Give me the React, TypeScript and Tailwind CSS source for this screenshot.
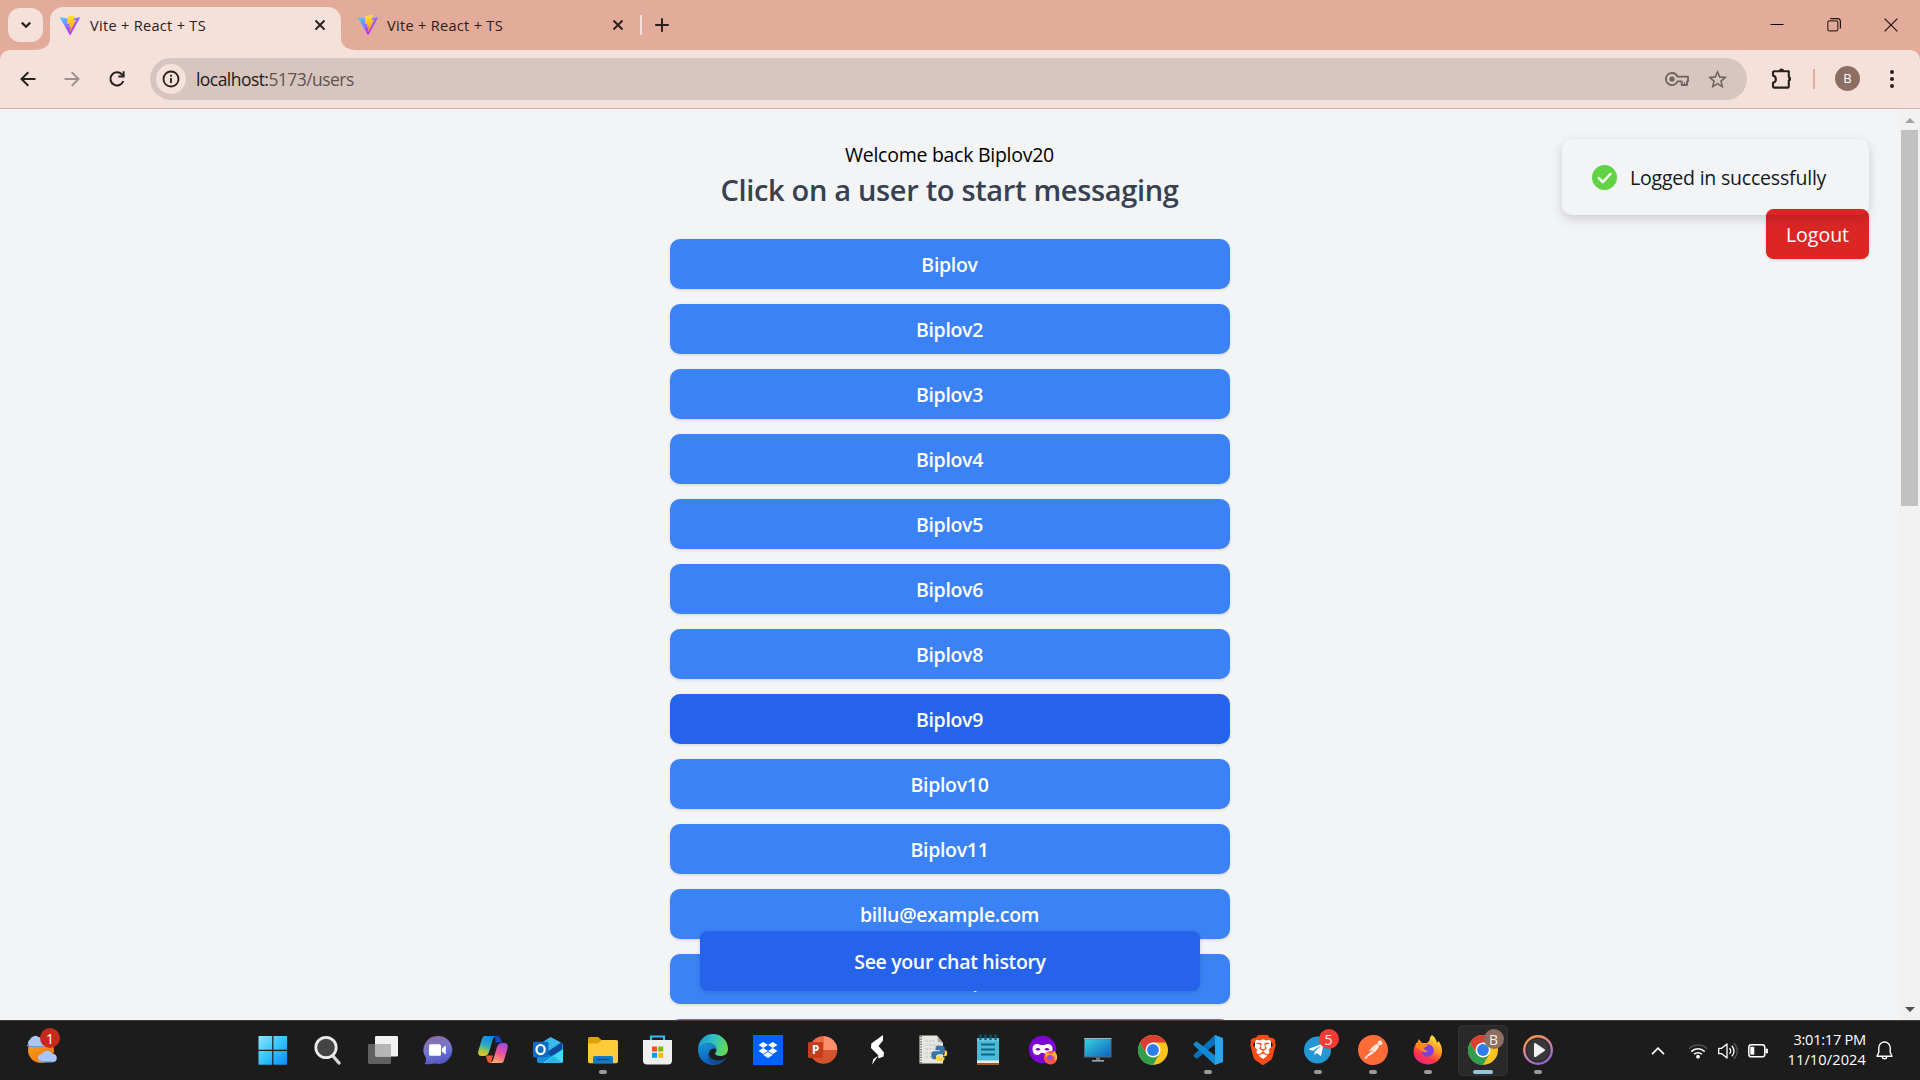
import React from "react";
import { SiDropbox, SiPostman, SiBrave } from "react-icons/si";
import { FaTelegramPlane } from "react-icons/fa";
import { MdStarOutline } from "react-icons/md";

const users = [
  "Biplov",
  "Biplov2",
  "Biplov3",
  "Biplov4",
  "Biplov5",
  "Biplov6",
  "Biplov8",
  "Biplov9",
  "Biplov10",
  "Biplov11",
  "billu@example.com",
  "billu2@example.com",
  "",
];

function ViteLogo({ id }: { id: string }) {
  return (
    <svg width="20" height="20" viewBox="0 0 256 257" className="shrink-0">
      <defs>
        <linearGradient id={id + "a"} x1="-.8%" x2="57.6%" y1="7.7%" y2="78.4%">
          <stop offset="0%" stopColor="#41D1FF" />
          <stop offset="100%" stopColor="#BD34FE" />
        </linearGradient>
        <linearGradient id={id + "b"} x1="43.4%" x2="50.3%" y1="2.2%" y2="89%">
          <stop offset="0%" stopColor="#FFEA83" />
          <stop offset="8.3%" stopColor="#FFDD35" />
          <stop offset="100%" stopColor="#FFA800" />
        </linearGradient>
      </defs>
      <path
        fill={`url(#${id}a)`}
        d="M255.153 37.938L134.897 252.976c-2.483 4.44-8.862 4.466-11.382.048L.875 37.958c-2.746-4.814 1.371-10.646 6.827-9.67l120.385 21.517a6.537 6.537 0 0 0 2.322-.004l117.867-21.483c5.438-.991 9.574 4.796 6.877 9.62Z"
      />
      <path
        fill={`url(#${id}b)`}
        d="M185.432.063L96.44 17.501a3.268 3.268 0 0 0-2.634 3.014l-5.474 92.456a3.268 3.268 0 0 0 3.997 3.378l24.777-5.718c2.318-.535 4.413 1.507 3.936 3.838l-7.361 36.047c-.495 2.426 1.782 4.5 4.151 3.78l15.304-4.649c2.372-.72 4.652 1.36 4.15 3.788l-11.698 56.621c-.732 3.542 3.979 5.473 5.943 2.437l1.313-2.028l72.516-144.72c1.215-2.423-.88-5.186-3.54-4.672l-25.505 4.922c-2.396.462-4.435-1.77-3.759-4.114l16.646-57.705c.677-2.35-1.37-4.583-3.769-4.113Z"
      />
    </svg>
  );
}

function TabClose() {
  return (
    <svg width="12" height="12" viewBox="0 0 12 12" className="shrink-0">
      <path d="M1.5 1.5 10.5 10.5M10.5 1.5 1.5 10.5" stroke="#27201e" strokeWidth="1.9" />
    </svg>
  );
}

function TabStrip() {
  return (
    <div className="flex h-[50px] items-start bg-[#e3ab99]">
      <div className="ml-2 mt-2 flex h-[34px] w-[35px] items-center justify-center rounded-[12px] bg-[#f5e0da]">
        <svg width="12" height="8" viewBox="0 0 12 8">
          <path d="M1.8 1.6 6 5.8l4.2-4.2" fill="none" stroke="#27201e" strokeWidth="2.2" />
        </svg>
      </div>
      <div className="mt-[38px] flex h-3 w-[7px] justify-end">
        <svg width="16" height="12" viewBox="0 0 16 12" className="shrink-0">
          <path d="M16 0v12H0c10 0 16-4 16-12Z" fill="#f5e0da" />
        </svg>
      </div>
      <div className="mt-[7px] flex h-[43px] w-[291px] items-center rounded-t-[13px] bg-[#f5e0da] pb-[7px] pl-[10px] pr-[15px]">
        <ViteLogo id="t1" />
        <span className="ml-[10px] grow whitespace-nowrap pt-0.5 text-[14.6px] tracking-[0.28px] text-[#27201e]">Vite + React + TS</span>
        <TabClose />
      </div>
      <div className="mt-[38px] h-3 w-[16px]">
        <svg width="16" height="12" viewBox="0 0 16 12">
          <path d="M0 0v12h16C6 12 0 8 0 0Z" fill="#f5e0da" />
        </svg>
      </div>
      <div className="mt-[7px] flex h-[36px] w-[267px] items-center">
        <span className="ml-px flex">
          <ViteLogo id="t2" />
        </span>
        <span className="ml-[9px] grow whitespace-nowrap pt-0.5 text-[14.6px] tracking-[0.28px] text-[#27201e]">Vite + React + TS</span>
        <TabClose />
      </div>
      <div className="ml-[16px] mt-[15px] h-5 w-[2px] bg-[#f5e0da]" />
      <svg width="16" height="16" viewBox="0 0 16 16" className="ml-[12px] mt-[17px]">
        <path d="M8 1.2v13.6M1.2 8h13.6" stroke="#27201e" strokeWidth="2" />
      </svg>
      <div className="mr-[22px] mt-[18px] flex grow justify-end gap-[43px]">
        <svg width="14" height="14" viewBox="0 0 14 14">
          <path d="M.5 6.5h13" stroke="#000" />
        </svg>
        <svg width="14" height="14" viewBox="0 0 14 14">
          <rect x=".8" y="2.8" width="10" height="10" rx="1.6" fill="none" stroke="#3a2a26" strokeWidth="1.2" />
          <path d="M3.3.6h7.2A2.9 2.9 0 0 1 13.4 3.500v7" fill="none" stroke="#1c1412" strokeWidth="1.2" />
        </svg>
        <svg width="14" height="14" viewBox="0 0 14 14">
          <path d="m.6.6 12.800 12.800M13.400.6.6 13.400" stroke="#1c1412" strokeWidth="1.2" />
        </svg>
      </div>
    </div>
  );
}

function Toolbar() {
  return (
    <div className="bg-[#e3ab99]">
      <div className="flex h-[59px] items-center rounded-t-[10px] border-b border-[#cdb4ad] bg-[#f5e0da] text-[#27201e]">
        <svg width="16" height="16" viewBox="0 0 16 16" className="ml-5">
          <path d="M15.500 8H1.800M8.300 1.200 1.500 8l6.800 6.800" fill="none" stroke="#27201e" strokeWidth="2" />
        </svg>
        <svg width="16" height="16" viewBox="0 0 16 16" className="ml-[28px]">
          <path d="M.5 8h13.700M7.700 1.200 14.500 8l-6.800 6.800" fill="none" stroke="#9d908c" strokeWidth="1.900" />
        </svg>
        <svg width="18" height="18" viewBox="0 0 18 18" className="ml-[28px]">
          <path d="M15.300 11A6.600 6.600 0 1 1 13.900 4.400L15.500 6" fill="none" stroke="#27201e" strokeWidth="2" />
          <path d="M16.600 1.300v6.200h-6.200V5.500h4.200V1.300Z" fill="#27201e" />
        </svg>
        <div className="ml-6 flex h-[42px] w-[1597px] items-center rounded-full bg-[#d7c6bf] pl-[6px]">
          <div className="flex size-[30px] items-center justify-center rounded-full bg-[#f5e0da]">
            <svg width="18" height="18" viewBox="0 0 18 18">
              <circle cx="9" cy="9" r="7.500" fill="none" stroke="#27201e" strokeWidth="1.800" />
              <path d="M9 8v5M9 4.800v1.900" stroke="#27201e" strokeWidth="1.800" />
            </svg>
          </div>
          <span className="ml-[10px] whitespace-nowrap pt-px text-[17.5px] tracking-[-0.55px] text-[#5f5450]">
            <span className="text-[#1f1a18]">localhost:</span>5173/users
          </span>
          <div className="mr-[18px] flex grow items-center justify-end gap-[17px] text-[#6b6360]">
            <svg width="24" height="14" viewBox="0 0 24 14">
              <path
                d="M7 1a6 6 0 1 0 5.400 8.400h4.300V13h5.300V9.400h1V4.600H12.400A6 6 0 0 0 7 1Z"
                fill="none"
                stroke="#6b6360"
                strokeWidth="1.800"
                strokeLinejoin="round"
              />
              <circle cx="7" cy="7" r="2.600" fill="#6b6360" />
              <path d="M19.300 10v3" stroke="#6b6360" />
            </svg>
            <MdStarOutline size={23} />
          </div>
        </div>
        <svg width="24" height="24" viewBox="0 0 24 24" className="ml-[22px] -mt-[2px]">
          <path
            d="M5.200 5.200h14.600v5.600a2.200 2.200 0 0 1 0 3.800v5.800a1.200 1.200 0 0 1-1.200 1.200H5.200a1.200 1.200 0 0 1-1.200-1.200v-3.600a3.700 3.700 0 0 0 0-7.200V6.400a1.200 1.200 0 0 1 1.200-1.200Z"
            fill="none"
            stroke="#27201e"
            strokeWidth="2.100"
            strokeLinejoin="round"
          />
          <path d="M10 5a2.500 2.500 0 0 1 5 0ZM19.500 10.200a2.500 2.500 0 0 1 0 5Z" fill="#27201e" />
        </svg>
        <div className="ml-[20px] h-5 w-[2px] bg-[#e3ab99]" />
        <div className="ml-5 -mt-px flex size-[25px] items-center justify-center rounded-full bg-[#8d6e63] text-[13px] text-white">B</div>
        <svg width="4" height="18" viewBox="0 0 4 18" className="ml-[30px]">
          <circle cx="2" cy="2" r="2" fill="#27201e" />
          <circle cx="2" cy="9" r="2" fill="#27201e" />
          <circle cx="2" cy="16" r="2" fill="#27201e" />
        </svg>
      </div>
    </div>
  );
}

function Toast() {
  return (
    <div className="absolute right-[51px] top-[30px] z-20 flex h-[76px] w-[307px] items-center rounded-[10px] pl-[30px] shadow-[0_4px_12px_rgba(0,0,0,0.16)]">
      <svg width="25" height="25" viewBox="0 0 25 25">
        <circle cx="12.500" cy="12.500" r="12.500" fill="#61d345" />
        <path d="m6.800 13.200 4 4L18.400 9" fill="none" stroke="#fff" strokeWidth="2.500" strokeLinecap="round" strokeLinejoin="round" />
      </svg>
      <span className="ml-[13px] whitespace-nowrap pt-0.5 text-[19.5px] tracking-[-0.2px] text-[#16181c]">Logged in successfully</span>
    </div>
  );
}

function Page() {
  return (
    <main className="relative flex h-[911px] overflow-hidden bg-[#f3f4f6]">
      <div className="flex grow flex-col items-center pt-[31px] text-[19.5px] leading-[30px]">
        <p className="shrink-0 tracking-[-0.27px] text-black">Welcome back Biplov20</p>
        <h1 className="mb-[29px] shrink-0 text-[29px] font-semibold leading-[40px] tracking-[-0.32px] text-[#374151]">
          Click on a user to start messaging
        </h1>
        <ul className="flex w-[560px] flex-col gap-[15px]">
          {users.map((name, i) => (
            <li
              key={i}
              className={
                "flex h-[50px] shrink-0 items-center justify-center rounded-[10px] pt-0.5 font-semibold tracking-[-0.32px] text-white shadow-[0_1px_3px_rgba(0,0,0,0.14)] " +
                (name === "Biplov9" ? "bg-[#2563eb]" : "bg-[#3b82f6]")
              }
            >
              {name}
            </li>
          ))}
        </ul>
      </div>
      <div className="flex w-[21px] flex-col items-center bg-[#f1f1f1]">
        <svg width="10" height="5" viewBox="0 0 10 5" className="mt-[9px]">
          <path d="M5 0l5 5H0Z" fill="#a3a3a3" />
        </svg>
        <div className="mt-[7px] h-[376px] w-[17px] bg-[#c1c1c1]" />
        <svg width="10" height="5" viewBox="0 0 10 5" className="mb-[8px] mt-auto">
          <path d="M0 0h10L5 5Z" fill="#505050" />
        </svg>
      </div>
      <button className="absolute bottom-[29px] left-[700px] h-[60px] w-[500px] rounded-[7.5px] bg-[#2563eb] pt-0.5 text-[19.5px] font-semibold tracking-[-0.33px] text-white shadow-[0_1px_4px_rgba(0,0,0,0.15)]">
        See your chat history
      </button>
      <button className="absolute right-[51px] top-[100px] z-10 h-[50px] w-[103px] rounded-[7.5px] bg-[#dc2626] pt-0.5 text-[19.5px] text-white shadow-[0_1px_3px_rgba(0,0,0,0.15)]">
        Logout
      </button>
      <Toast />
    </main>
  );
}

function Chrome() {
  return (
    <>
      <circle cx="15" cy="15" r="15" fill="#fcc31e" />
      <path d="M2 7.500A15 15 0 0 0 15 30l6.500-11.200L15 15 8.500 18.700Z" fill="#2f9e4f" />
      <path d="M2 7.500A15 15 0 0 1 28 7.500H15L8.500 18.700Z" fill="#d93f33" />
      <circle cx="15" cy="15" r="7.500" fill="#fff" />
      <circle cx="15" cy="15" r="5.900" fill="#2f7de9" />
    </>
  );
}

const icons: { art: React.ReactNode; badge?: string; badgeColor?: string; mark?: "run" | "active" }[] = [
  {
    art: (
      <>
        <defs>
          <linearGradient id="win" x1="0" y1="0" x2="1" y2="1">
            <stop offset="0" stopColor="#8ce6ff" />
            <stop offset=".5" stopColor="#35c3fc" />
            <stop offset="1" stopColor="#0a8dfa" />
          </linearGradient>
        </defs>
        <path d="M.5 1h13.700v13.700H.5ZM15.400 1H29.100v13.700H15.400ZM.5 16h13.700v13.700H.5ZM15.400 16H29.100v13.700H15.400Z" fill="url(#win)" />
      </>
    ),
  },
  {
    art: (
      <>
        <path d="m19.500 20.500 6.500 7.500" stroke="#d5d9dd" strokeWidth="3.400" strokeLinecap="round" />
        <circle cx="13" cy="12.500" r="10.200" fill="#444" stroke="#e9ebed" strokeWidth="2.800" />
      </>
    ),
  },
  {
    art: (
      <>
        <rect x="0" y="9" width="23" height="20" rx="1.200" fill="#616161" />
        <rect x="7" y="1" width="23" height="20.500" rx="1.200" fill="#f1f1f1" />
        <path d="M7 9h16v12.500H8.200A1.200 1.200 0 0 1 7 20.300Z" fill="#b5b5b5" />
      </>
    ),
  },
  {
    art: (
      <>
        <defs>
          <linearGradient id="chat" x1=".2" y1="0" x2=".5" y2="1">
            <stop offset="0" stopColor="#91699f" />
            <stop offset=".5" stopColor="#7379cf" />
            <stop offset="1" stopColor="#5254c3" />
          </linearGradient>
        </defs>
        <path d="M15 1a14 14 0 1 1-3 27.600c-3 .6-7 .8-10.700.4C3 27.500 3 25.500 3 23A14 14 0 0 1 15 1Z" fill="url(#chat)" />
        <rect x="6" y="9.300" width="12" height="11.500" rx="1.600" fill="#fff" />
        <path d="m19 13.400 3.800-2.800v9L19 16.800Z" fill="#fff" />
      </>
    ),
  },
  {
    art: (
      <>
        <defs>
          <linearGradient id="cpa" x1=".6" y1="0" x2=".3" y2="1">
            <stop offset="0" stopColor="#1687e0" />
            <stop offset=".45" stopColor="#27a9cb" />
            <stop offset=".8" stopColor="#a6c83e" />
            <stop offset="1" stopColor="#f0c328" />
          </linearGradient>
          <linearGradient id="cpb" x1=".7" y1="0" x2=".3" y2="1">
            <stop offset="0" stopColor="#a14ce0" />
            <stop offset=".5" stopColor="#ee5595" />
            <stop offset="1" stopColor="#ffb25a" />
          </linearGradient>
        </defs>
        <path d="M17 1h2.500c2.500 0 3.500 4.500 5 6.500h-7Z" fill="#1647bd" />
        <path d="M7 1h12c-3 0-4 2-5 6l-3 10c-1 3-3 4-5 4H3.500C0 21-.2 18 .6 15l3-10C4.500 2 5 1 7 1Z" fill="url(#cpa)" />
        <path d="M8 20.500h7l-2 7.500c-3 0-4-1-5-7.500Z" fill="#ed5a34" />
        <path d="M23 28H11c3 0 4-2 5-6l3-10c1-3 3-4 5-4h2.500c3.500 0 3.700 3 2.900 6l-3 10c-.9 3-1.400 4-3.400 4Z" fill="url(#cpb)" />
      </>
    ),
  },
  {
    art: (
      <>
        <path d="M4 12 17.500 2.500 30 9v17a2 2 0 0 1-2 2H6a2 2 0 0 1-2-2Z" fill="#1593d9" />
        <path d="M6 9.500 17.500 2 28 7.500 15 16H6Z" fill="#38b9ef" />
        <path d="m13 18 16-11v8L18 21Z" fill="#0b4a9b" />
        <path d="M10 28 30 14v12a2 2 0 0 1-2 2Z" fill="#42d6f7" />
        <path d="m12 28 9-7 8 7Z" fill="#29b4eb" />
        <rect x="0" y="6.700" width="15.500" height="15.800" rx="1.500" fill="#0d6cc6" />
        <ellipse cx="7.600" cy="14.600" rx="4.100" ry="4.600" fill="none" stroke="#fff" strokeWidth="2.200" />
      </>
    ),
  },
  {
    mark: "run",
    art: (
      <>
        <path d="M0 3.500A1.500 1.500 0 0 1 1.500 2H10l3.500 3H20v8H0Z" fill="#dfa00b" />
        <path d="M0 8.500h10l4-3.500h14.500A1.500 1.500 0 0 1 30 6.500v20a1.700 1.700 0 0 1-1.700 1.700H1.700A1.700 1.700 0 0 1 0 26.500Z" fill="#fdca3c" />
        <path d="M5 28.200V23a2 2 0 0 1 2-2h16a2 2 0 0 1 2 2v5.200Z" fill="#117ac9" />
        <path d="M8.500 24.500h13" stroke="#0a4b8a" strokeWidth="1.300" />
      </>
    ),
  },
  {
    art: (
      <>
        <path d="M8 6V1.500h13V6" fill="none" stroke="#35bdf3" strokeWidth="2.200" />
        <path d="M0 5h29v20.500a4 4 0 0 1-4 4H4a4 4 0 0 1-4-4Z" fill="#efefef" />
        <path d="M9 11.500h5v5H9Z" fill="#f04f22" />
        <path d="M15.200 11.500h5v5h-5Z" fill="#7fb900" />
        <path d="M9 17.800h5v5H9Z" fill="#00a2ed" />
        <path d="M15.200 17.800h5v5h-5Z" fill="#feb800" />
      </>
    ),
  },
  {
    art: (
      <>
        <defs>
          <linearGradient id="edgeTop" x1="0" y1=".3" x2="1" y2=".5">
            <stop offset="0" stopColor="#1d95d8" />
            <stop offset=".5" stopColor="#31c1c4" />
            <stop offset="1" stopColor="#65dc4b" />
          </linearGradient>
          <linearGradient id="edgeLow" x1="0" y1="0" x2=".3" y2="1">
            <stop offset="0" stopColor="#1799dc" />
            <stop offset="1" stopColor="#0c5cb8" />
          </linearGradient>
        </defs>
        <path d="M0 14A15 15 0 0 1 30 14c0 4.500-3.500 7-7.500 7-3.500 0-5.500-1.200-5.500-2.200 0-.8 1.500-1.600 1.500-4C18.500 11 15 8.500 11 8.500 5 8.500 1 11 0 14Z" fill="url(#edgeTop)" />
        <path d="M0 15C.5 10 5 8.500 10 8.500c5.500 0 8.500 3 8.500 6-2-2-6.500-1.500-7.500 3-1 5 3 10 8 12A15 15 0 0 1 0 15Z" fill="url(#edgeLow)" />
        <path d="M11 17.500c0 5 4.500 8 9 8 3 0 5.500-1 7-2 .7-.4 1 0 .6.600A15 15 0 0 1 17 29.900C11 28.500 8.500 21 11 17.500Z" fill="#104d91" />
      </>
    ),
  },
  {
    art: (
      <>
        <path d="M0 0h30v30H0Z" fill="#0061fe" />
        <SiDropbox x={5.5} y={5.5} size={19} color="#fff" />
      </>
    ),
  },
  {
    art: (
      <>
        <circle cx="15.500" cy="15" r="13.800" fill="#d35230" />
        <path d="M15.500 1.200A13.800 13.800 0 0 1 29.300 15H15.500Z" fill="#ff8f6b" />
        <path d="M15.500 1.200A13.800 13.800 0 0 0 1.700 15h13.800Z" fill="#ed6c47" />
        <rect x="0" y="7" width="15" height="16" rx="1.300" fill="#c43e1c" />
        <text x="4" y="19" fontSize="11.500" fontWeight="700" fill="#fff" fontFamily="Open Sans">P</text>
      </>
    ),
  },
  {
    art: (
      <>
        <path d="M20 0v5.500L15.500 11 21 17.500l-.5 4-5 2-.5-3.500L8 13l.3-4.500Z" fill="#fff" />
        <path d="M15 21 9 29.700 10.300 24Z" fill="#fff" />
      </>
    ),
  },
  {
    art: (
      <>
        <path d="M1.500.5V28.500H25V8L19 .5Z" fill="#e6e5e2" />
        <path d="M19 .5 25 8l-5-1Z" fill="#aaa" />
        <path d="M3 1v28" stroke="#5f5f5f" strokeWidth="1.500" strokeDasharray="1.200 1.400" />
        <path d="M7 6h10M7 10h14M7 14h10M7 18h7M7 22h8" stroke="#c4c3c0" strokeDasharray="3 1" />
        <path d="M21 10.500c-3 0-3.500 1-3.500 3v1.700h4.200v1h-5.500c-2 0-3 1.500-3 4s1 4 2.700 4H18v-2c0-2 1.200-3 3-3h3.500c1.500 0 2.300-1 2.300-2.300v-3.500c0-2-2-2.900-5.800-2.900Z" fill="#3b76a9" />
        <path d="M22 26.500c4 0 4.500-1.500 4.500-3v-1.200h-4.700v-1H27c2 0 2.200-1.500 2.200-3.500 0-1.500-.8-2.500-2.500-2.500v2.500c0 1.700-1 3-2.700 3h-3c-2 0-3 1-3 2.500v1c0 1.500 1.500 2.200 4 2.200Z" fill="#fdd343" />
      </>
    ),
  },
  {
    art: (
      <>
        <path d="M4 3h22v25a2 2 0 0 1-2 2H6a2 2 0 0 1-2-2Z" fill="#4bbbd8" />
        <path d="M4 25.500h22V28H4Z" fill="#e8ecee" />
        <path d="M4 28h22v2H4Z" fill="#a85a1c" />
        <path d="M4 3h22v3H4Z" fill="#62cbe5" />
        <path d="M7.500.5V4M12.500.5V4M17.500.5V4M22.500.5V4" stroke="#0d5770" strokeWidth="2.400" strokeLinecap="round" />
        <path d="M8 9.500h14M8 14.500h14M8 19.500h14" stroke="#0e6683" strokeWidth="1.900" />
      </>
    ),
  },
  {
    art: (
      <>
        <circle cx="14.500" cy="14.500" r="13.700" fill="#7d05d5" />
        <path d="M4.500 13.500c0-3 2-4.500 4.500-4.500s3.500 1.300 5.500 1.300S17.500 9 20 9s4.500 1.500 4.500 4.500c0 3.500-1.500 6.500-4.500 6.500-2.500 0-3.500-2.300-5.500-2.300S11.500 20 9 20c-3 0-4.500-3-4.500-6.500Z" fill="#fff" />
        <path d="M7.500 14.500c.8-2 3.800-2 5 0-1.200 1.300-4 1.500-5 0ZM16.500 14.500c.8-2 3.800-2 5 0-1.200 1.300-4 1.500-5 0Z" fill="#7d05d5" />
        <circle cx="22.500" cy="22.800" r="6.700" fill="#ff5540" />
        <path d="M17 17.500c3 0 3 1 6 1.500 2 .5 2-2 3-3.500 2 2 3.700 5 3 8-1 3-3 2-2-1-3-4-6 0-9-1Z" fill="#ffb22e" />
        <circle cx="22" cy="22.500" r="2.800" fill="#9450e8" />
      </>
    ),
  },
  {
    art: (
      <>
        <defs>
          <linearGradient id="pc" x1="0" y1="0" x2="1" y2="1">
            <stop offset="0" stopColor="#3ad0de" />
            <stop offset="1" stopColor="#0c62bf" />
          </linearGradient>
        </defs>
        <path d="M1 3h27.500v19.500H1Z" fill="#4c6b7d" />
        <path d="M1 3h27.500v1H1Z" fill="#a8b5bc" />
        <path d="M2 4.200h25.500v17.200H2Z" fill="url(#pc)" />
        <path d="M13 22.500h4V25h-4Z" fill="#687a84" />
        <path d="M9 25h12v1.700H9Z" fill="#8fa0a9" />
      </>
    ),
  },
  { art: <Chrome /> },
  {
    mark: "run",
    art: (
      <>
        <path d="M22 0 30 3v24l-8 3Z" fill="#29a5ee" />
        <path d="M22 0 1 19.500a1.500 1.500 0 0 0 0 2.200l1.500 1.400c.6.500 1.500.5 2 .1L22 9.500Z" fill="#0a71b8" />
        <path d="M22 30 1 10.500a1.500 1.500 0 0 1 0-2.200L2.500 7c.6-.5 1.500-.5 2-.1L22 20.500Z" fill="#1289d1" />
      </>
    ),
  },
  {
    art: (
      <>
        <path d="M7 4h16v19l-8 5-8-5Z" fill="#fff" />
        <SiBrave x={0} y={0} size={30} color="#fa4b17" />
      </>
    ),
  },
  {
    mark: "run",
    badge: "5",
    badgeColor: "#f43c34",
    art: (
      <>
        <circle cx="14.500" cy="15" r="13.500" fill="#2398d4" />
        <FaTelegramPlane x={5} y={6.5} size={16.5} color="#fff" />
      </>
    ),
  },
  {
    mark: "run",
    art: (
      <>
        <circle cx="15" cy="15" r="14" fill="#fff" />
        <SiPostman x={0} y={0} size={30} color="#ff6c37" />
      </>
    ),
  },
  {
    mark: "run",
    art: (
      <>
        <defs>
          <linearGradient id="ff" x1=".8" y1="0" x2=".3" y2="1">
            <stop offset="0" stopColor="#fff04c" />
            <stop offset=".4" stopColor="#ff9a24" />
            <stop offset=".75" stopColor="#ff3647" />
            <stop offset="1" stopColor="#e91f8d" />
          </linearGradient>
        </defs>
        <path d="M19 0c3 2 4.500 5 5 8l1.500-2c3 4 4.500 9 3 14-2 6-7.500 9.500-13.500 9.500S2.500 26 1 20c-1-5 0-9 2.500-12L4 10 5.500 4 9 8h5l2.500-2.500C16.500 3 17.500 1 19 0Z" fill="url(#ff)" />
        <circle cx="14.500" cy="15.500" r="6.300" fill="#7b40df" />
        <path d="M3 8c3-1 5 0 6 1.500h6c-1 2.500-3 3-4.500 3.500 1 2.500 2.500 3 5 2.500-2 2.500-6.500 2.500-8-1L3 12.500Z" fill="#ff8a1b" />
      </>
    ),
  },
  { mark: "active", badge: "B", badgeColor: "#8d6e63", art: <Chrome /> },
  {
    mark: "run",
    art: (
      <>
        <defs>
          <linearGradient id="mp" x1=".2" y1="0" x2=".7" y2="1">
            <stop offset="0" stopColor="#ff9345" />
            <stop offset=".45" stopColor="#d986a0" />
            <stop offset="1" stopColor="#8c62d6" />
          </linearGradient>
        </defs>
        <circle cx="15" cy="15" r="13.800" fill="#2b2b2b" stroke="url(#mp)" strokeWidth="2.400" />
        <circle cx="15" cy="15" r="11" fill="#393939" />
        <path d="M11 9.200c0-1 .8-1.500 1.700-1l8.800 6c.8.500.8 1.200 0 1.700l-8.800 6c-.9.500-1.700 0-1.700-1Z" fill="#f3f3f3" />
      </>
    ),
  },
];

function Weather() {
  return (
    <div className="relative ml-[25px] mt-[13px] h-[36px] w-[36px] shrink-0">
      <svg width="36" height="36" viewBox="0 0 36 36">
        <defs>
          <linearGradient id="sun" x1="0" y1="0" x2=".7" y2="1">
            <stop offset="0" stopColor="#f3ae1c" />
            <stop offset="1" stopColor="#f2700f" />
          </linearGradient>
        </defs>
        <circle cx="16" cy="16" r="13" fill="url(#sun)" />
        <path d="M5 12.500a4 4 0 0 1 0-7A5.500 5.500 0 0 1 14.500 4a4.500 4.500 0 0 1 5 8.500Z" fill="#a8c8fa" />
        <path d="M2 10.800c1 1.500 2 1.700 3.500 1.700h13" stroke="#7396e3" fill="none" strokeWidth="1.200" />
        <path d="M17 28a4 4 0 0 1 0-8 5.800 5.800 0 0 1 10.500 0A4 4 0 0 1 28 28Z" fill="#a8c8fa" />
        <path d="M14.500 26c1 1.500 1.700 1.800 3 1.800H28" stroke="#7396e3" fill="none" strokeWidth="1.200" />
      </svg>
      <span className="absolute left-[15px] top-[-6px] flex size-5 items-center justify-center rounded-full bg-[#c42b1c] text-[14px] text-white">1</span>
    </div>
  );
}

function Taskbar() {
  return (
    <div className="flex h-[60px] overflow-hidden border-t border-[#3e3f40] bg-[#1c1c1c]">
      <Weather />
      <div className="ml-[184px] flex shrink-0">
        {icons.map((icon, i) => (
          <div key={i} className="flex w-[55px] justify-center">
            <div
              className={
                "mt-1 flex h-[51px] w-[50px] flex-col items-center rounded-[5px] border pt-[9px] " +
                (icon.mark === "active" ? "border-[#333] bg-[#292929]" : "border-transparent")
              }
            >
              <div className="relative size-[30px]">
                <svg width="30" height="30" viewBox="0 0 30 30" className="overflow-visible">
                  {icon.art}
                </svg>
                {icon.badge && (
                  <span
                    className="absolute left-[16px] top-[-6px] flex size-5 items-center justify-center rounded-full text-[14px] text-white/90"
                    style={{ backgroundColor: icon.badgeColor }}
                  >
                    {icon.badge}
                  </span>
                )}
              </div>
              {icon.mark === "run" && <div className="mt-[5px] h-1 w-2 rounded-full bg-[#9a9a9a]" />}
              {icon.mark === "active" && <div className="mt-[5px] h-1 w-5 rounded-full bg-[#99c4d9]" />}
            </div>
          </div>
        ))}
      </div>
      <div className="flex grow items-center justify-end pr-[27px]">
        <svg width="14" height="8" viewBox="0 0 14 8" className="mr-[23px]">
          <path d="M1 7.200 7 1.200l6 6" fill="none" stroke="#fff" strokeWidth="1.700" />
        </svg>
        <svg width="20" height="16" viewBox="0 0 20 16" className="mr-[10px]">
          <path d="M.8 5.800a13 13 0 0 1 18.400 0" fill="none" stroke="#4f4f4f" strokeWidth="1.400" />
          <path d="M3.300 8.600a9.400 9.400 0 0 1 13.400 0M6 11.300a5.700 5.700 0 0 1 8 0" fill="none" stroke="#fff" strokeWidth="1.500" />
          <circle cx="10" cy="13.700" r="1.900" fill="#fff" />
        </svg>
        <svg width="20" height="18" viewBox="0 0 20 18" className="mr-[10px]">
          <path d="M.7 6.300h3L9 2v14l-5.300-4.300h-3Z" fill="none" stroke="#fff" strokeWidth="1.300" strokeLinejoin="round" />
          <path d="M11.500 6.300a4 4 0 0 1 0 5.400M13.800 3.700a7.500 7.500 0 0 1 0 10.600" fill="none" stroke="#fff" strokeWidth="1.300" />
          <path d="M16 1.200a11 11 0 0 1 0 15.600" fill="none" stroke="#555" strokeWidth="1.300" />
        </svg>
        <svg width="20" height="14" viewBox="0 0 20 14" className="mr-[20px]">
          <rect x=".8" y=".8" width="16" height="12" rx="2.600" fill="none" stroke="#fff" strokeWidth="1.500" />
          <rect x="2.300" y="2.800" width="4" height="8" rx=".8" fill="#fff" />
          <path d="M18 5h1.500v4H18Z" fill="#fff" stroke="#fff" strokeWidth=".8" />
        </svg>
        <div className="flex w-[78px] flex-col items-end pb-[3px] text-[14.6px] leading-5 text-white">
          <div className="whitespace-nowrap tracking-[-0.25px]">3:01:17 PM</div>
          <div className="whitespace-nowrap tracking-[0.1px]">11/10/2024</div>
        </div>
        <svg width="17" height="19" viewBox="0 0 17 19" className="ml-[10px]">
          <path d="M8.500 1a5.700 5.700 0 0 0-5.700 5.700v4.500L1 15.200h15l-1.800-4V6.700A5.700 5.700 0 0 0 8.500 1ZM6.300 15.500a2.200 2.200 0 0 0 4.400 0" fill="none" stroke="#fff" strokeWidth="1.400" strokeLinejoin="round" />
        </svg>
      </div>
    </div>
  );
}

export default function App() {
  return (
    <div className="h-[1080px] w-[1920px] overflow-hidden font-['Open_Sans','Noto_Sans',sans-serif]">
      <TabStrip />
      <Toolbar />
      <Page />
      <Taskbar />
    </div>
  );
}
